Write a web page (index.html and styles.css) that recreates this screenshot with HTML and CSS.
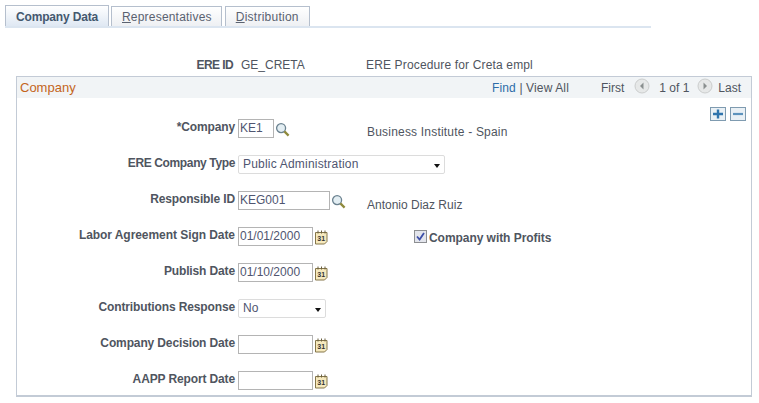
FILE: index.html
```html
<!DOCTYPE html>
<html lang="en">
<head>
<meta charset="utf-8">
<title>Company Data</title>
<link rel="stylesheet" href="styles.css">
</head>
<body>
<nav class="tabs">
  <a class="tab tab-active">Company Data</a>
  <a class="tab tab-rep"><u>R</u>epresentatives</a>
  <a class="tab tab-dist"><u>D</u>istribution</a>
</nav>
<div class="ere">
  <b class="ere-label">ERE ID</b>
  <span class="ere-id">GE_CRETA</span>
  <span class="ere-desc">ERE Procedure for Creta empl</span>
</div>
<section class="box">
  <header class="box-head">
    <span class="box-title">Company</span>
    <span class="links"><a class="find">Find</a> | <a>View All</a></span>
    <span class="pager">
      <span>First</span>
      <svg class="nav" viewBox="0 0 16 16"><circle cx="8" cy="8" r="7" fill="#e6e8e8" stroke="#cbcdcd"/><path d="M9.5 4.5v7L6 8z" fill="#8a8f8f"/></svg>
      <span>1 of 1</span>
      <svg class="nav" viewBox="0 0 16 16"><circle cx="8" cy="8" r="7" fill="#e6e8e8" stroke="#cbcdcd"/><path d="M6.5 4.5v7L10 8z" fill="#8a8f8f"/></svg>
      <span>Last</span>
    </span>
  </header>
  <div class="actions">
    <span class="sq"><svg viewBox="0 0 14 12"><path d="M2 6h10M7 1.5v9" stroke="#2f74ad" stroke-width="2.4"/></svg></span>
    <span class="sq"><svg viewBox="0 0 14 12"><path d="M2 6h10" stroke="#5d93bd" stroke-width="2.2"/></svg></span>
  </div>
  <div class="form">
    <label>*Company</label>
    <div class="cell">
      <span class="input w36">KE1</span>
      <svg class="lens" viewBox="0 0 16 16"><circle cx="6.5" cy="6.5" r="4.8" fill="#e3eef3" stroke="#6b8290" stroke-width="1.4"/><path d="M10 10l4.5 4.5" stroke="#8f8a3c" stroke-width="2.4"/></svg>
      <span class="desc desc-a">Business Institute - Spain</span>
    </div>
    <label class="tight">ERE Company Type</label>
    <div class="cell">
      <span class="select w207">Public Administration<i class="arrow"></i></span>
    </div>
    <label>Responsible ID</label>
    <div class="cell">
      <span class="input w92">KEG001</span>
      <svg class="lens" viewBox="0 0 16 16"><circle cx="6.5" cy="6.5" r="4.8" fill="#e3eef3" stroke="#6b8290" stroke-width="1.4"/><path d="M10 10l4.5 4.5" stroke="#8f8a3c" stroke-width="2.4"/></svg>
      <span class="desc desc-b">Antonio Diaz Ruiz</span>
    </div>
    <label class="snug">Labor Agreement Sign Date</label>
    <div class="cell">
      <span class="input w75">01/01/2000</span>
      <svg class="cal" viewBox="0 0 13 15"><path d="M.5 2.5h11.5v9l-2.5 2.5H.5z" fill="#f6e9bd" stroke="#85764a"/><path d="M3 .5v3M6.500 .5v3M10 .5v3" stroke="#6b6040"/><text x="2.300" y="11" class="cal-text">31</text></svg>
      <span class="check-wrap">
        <svg class="check" viewBox="0 0 13 13"><rect x=".5" y=".5" width="12" height="12" fill="#e3e5ec" stroke="#8d8f92"/><path d="M3 6.500l2.600 3L10 3" fill="none" stroke="#3d4fa8" stroke-width="1.800"/></svg>
        <b class="check-label">Company with Profits</b>
      </span>
    </div>
    <label>Publish Date</label>
    <div class="cell">
      <span class="input w75">01/10/2000</span>
      <svg class="cal" viewBox="0 0 13 15"><path d="M.5 2.5h11.5v9l-2.5 2.5H.5z" fill="#f6e9bd" stroke="#85764a"/><path d="M3 .5v3M6.500 .5v3M10 .5v3" stroke="#6b6040"/><text x="2.300" y="11" class="cal-text">31</text></svg>
    </div>
    <label>Contributions Response</label>
    <div class="cell">
      <span class="select w88">No<i class="arrow"></i></span>
    </div>
    <label>Company Decision Date</label>
    <div class="cell">
      <span class="input w75"></span>
      <svg class="cal" viewBox="0 0 13 15"><path d="M.5 2.5h11.5v9l-2.5 2.5H.5z" fill="#f6e9bd" stroke="#85764a"/><path d="M3 .5v3M6.500 .5v3M10 .5v3" stroke="#6b6040"/><text x="2.300" y="11" class="cal-text">31</text></svg>
    </div>
    <label>AAPP Report Date</label>
    <div class="cell">
      <span class="input w75"></span>
      <svg class="cal" viewBox="0 0 13 15"><path d="M.5 2.5h11.5v9l-2.5 2.5H.5z" fill="#f6e9bd" stroke="#85764a"/><path d="M3 .5v3M6.500 .5v3M10 .5v3" stroke="#6b6040"/><text x="2.300" y="11" class="cal-text">31</text></svg>
    </div>
  </div>
</section>
</body>
</html>
```
FILE: styles.css
```css
* { box-sizing: border-box; }
html, body { margin: 0; background: #fff; }
body {
  width: 759px;
  height: 403px;
  overflow: hidden;
  padding: 5px 0 0 5px;
  font: 12px/14px "Liberation Sans", Arial, sans-serif;
  color: #4f5560;
}
b { font-weight: 700; }
.tabs {
  display: flex;
  align-items: flex-end;
  gap: 2px;
  width: 646px;
  height: 23px;
  border-bottom: 2px solid #dbe5f0;
}
.tab {
  display: block;
  height: 20px;
  padding: 3px 10px 0;
  border: 1px solid #b5bfcd;
  border-bottom: 0;
  background: linear-gradient(#fff, #eef0f3);
  color: #5a6270;
  white-space: nowrap;
}
.tab-rep { padding-right: 9px; letter-spacing: 0.2px; }
.tab-dist { margin-left: 1px; letter-spacing: 0.25px; }
.tab-active {
  height: 21px;
  padding-top: 4px;
  font-weight: 700;
  letter-spacing: -0.17px;
  color: #44586f;
  background: linear-gradient(#fff, #dfe8f3);
}
.ere {
  display: flex;
  height: 14px;
  margin-top: 30px;
  margin-bottom: 4px;
}
.ere-label { width: 228px; text-align: right; letter-spacing: -0.6px; }
.ere-id { width: 125px; margin-left: 8px; }
.ere-desc { letter-spacing: 0.15px; }
.box {
  width: 736px;
  height: 321px;
  margin-left: 11px;
  border: 1px solid #c3cbd6;
  border-bottom-width: 2px;
}
.box-head {
  display: flex;
  align-items: center;
  height: 21px;
  padding: 0 10px 0 3px;
  background: #f1f4f6;
}
.box-title { color: #c4651c; flex: 1; font-size: 13px; }
.links { margin-right: 32px; letter-spacing: 0.13px; }
.find { color: #2d6ca8; }
.pager { display: flex; align-items: center; }
.pager span:first-child { margin-right: 10px; }
.pager span:last-child { margin-left: 5px; }
.pager span:nth-child(3) { margin: 0 8px 0 9px; }
.nav { width: 16px; height: 16px; display: block; margin-top: -3px; }
.actions {
  display: flex;
  justify-content: flex-end;
  gap: 4px;
  height: 21px;
  padding: 9px 5px 0 0;
}
.sq {
  display: block;
  width: 16px;
  height: 14px;
  border: 1px solid #7f9bb0;
  background: #e9f0f5;
}
.sq svg { display: block; width: 14px; height: 12px; }
.form {
  display: grid;
  grid-template-columns: 218px 1fr;
  grid-auto-rows: 36px;
  column-gap: 3px;
}
.form label {
  font-weight: 700;
  text-align: right;
  padding-top: 1px;
  letter-spacing: -0.13px;
}
.form .tight { letter-spacing: -0.37px; }
.form .snug { letter-spacing: -0.06px; }
.cell { position: relative; display: flex; align-items: flex-start; }
.input {
  display: block;
  height: 19px;
  padding: 1px;
  border: 1px solid #b4b4b4;
  background: #fff;
  color: #4f5570;
}
.w36 { width: 36px; }
.w92 { width: 92px; }
.w75 { width: 75px; }
.select {
  position: relative;
  display: block;
  height: 19px;
  padding: 1px 4px;
  border: 1px solid #dcdcdc;
  border-radius: 2px;
  background: #fff;
  color: #4f5570;
  letter-spacing: 0.2px;
}
.w207 { width: 207px; }
.w88 { width: 88px; }
.arrow {
  position: absolute;
  right: 4px;
  top: 8px;
  border: 3.5px solid transparent;
  border-top: 4px solid #111;
  border-bottom: 0;
}
.lens { width: 15px; height: 15px; margin: 3px 0 0 1px; }
.cal { width: 13px; height: 15px; margin: 3px 0 0 2px; }
.cal-text { font: 700 7px "Liberation Sans", sans-serif; fill: #333; }
.desc { position: absolute; left: 129px; }
.desc-a { top: 6px; letter-spacing: 0.2px; }
.desc-b { top: 7px; }
.check-wrap {
  position: absolute;
  left: 176px;
  top: 3px;
  display: flex;
  align-items: flex-start;
  gap: 2px;
}
.check { width: 13px; height: 13px; display: block; }
.check-label { padding-top: 1px; letter-spacing: -0.05px; }
```
